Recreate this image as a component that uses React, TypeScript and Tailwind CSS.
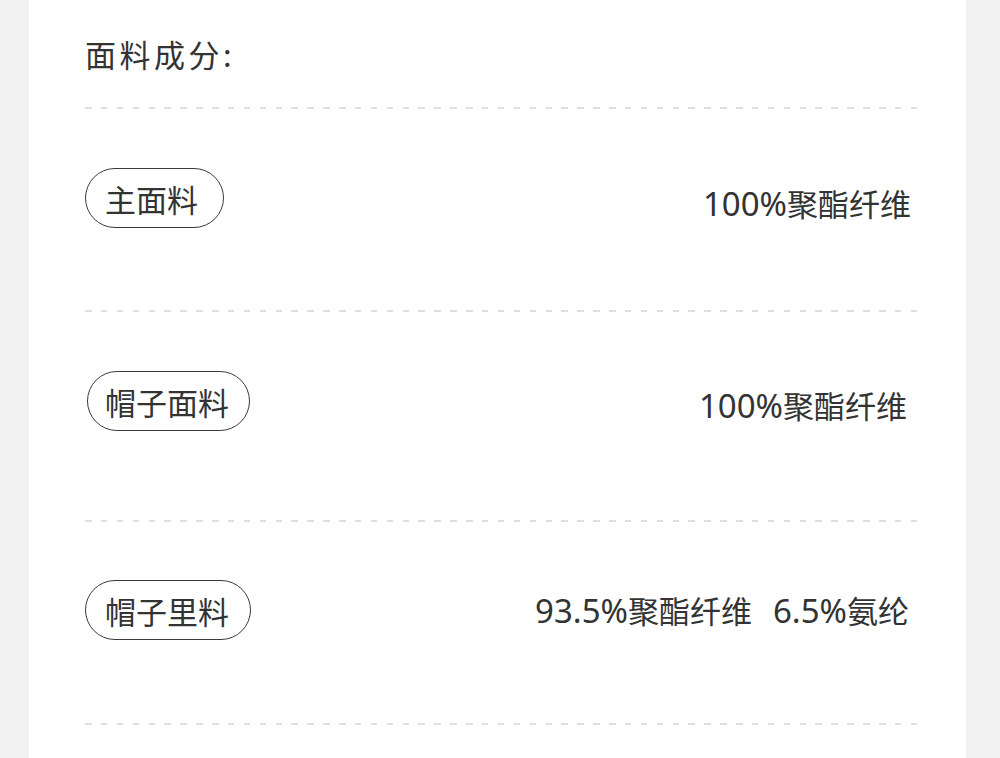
import React from "react";

const cjk = { fontFamily: '"Noto Sans CJK SC", "Noto Sans", sans-serif' };
const latin = { fontFamily: '"Noto Sans", "Noto Sans CJK SC", sans-serif' };

function Dash({ className = "" }: { className?: string }) {
  return (
    <div
      className={
        "h-[2px] w-full bg-[repeating-linear-gradient(90deg,#dedede_0_6.5px,transparent_6.5px_15.88px)] " +
        className
      }
    />
  );
}

function Pill({ label, w, pl }: { label: string; w: string; pl: string }) {
  return (
    <div
      className={
        "flex h-[60px] items-center rounded-full border border-[#3a3a3a] text-[31px] leading-[31px] text-[#333] " +
        w +
        " " +
        pl
      }
      style={cjk}
    >
      {label}
    </div>
  );
}

function Num({ children, className = "" }: { children: React.ReactNode; className?: string }) {
  return (
    <span className={"text-[33px] " + className} style={latin}>
      {children}
    </span>
  );
}

export default function App() {
  return (
    <div className="flex h-[758px] w-[1000px] bg-[#f1f1f1]">
      <div className="ml-[29px] h-full w-[937px] bg-white pl-[56px] pr-[48px]">
        <div
          className="mt-[38px] text-[31px] leading-[31px] tracking-[3.5px] text-[#333]"
          style={cjk}
        >
          面料成分:
        </div>
        <Dash className="mt-[38px]" />

        <div className="mt-[59px] flex items-start justify-between">
          <Pill label="主面料" w="w-[139px]" pl="pl-[19px]" />
          <div
            className="mt-[20px] mr-[7px] whitespace-nowrap text-[31px] leading-[30px] text-[#333]"
            style={cjk}
          >
            <Num>100%</Num>聚酯纤维
          </div>
        </div>
        <Dash className="mt-[82px]" />

        <div className="mt-[59px] flex items-start justify-between">
          <div className="ml-[2px]">
            <Pill label="帽子面料" w="w-[163px]" pl="pl-[17px]" />
          </div>
          <div
            className="mt-[19px] mr-[11px] whitespace-nowrap text-[31px] leading-[30px] text-[#333]"
            style={cjk}
          >
            <Num>100%</Num>聚酯纤维
          </div>
        </div>
        <Dash className="mt-[89px]" />

        <div className="mt-[58px] flex items-start justify-between">
          <Pill label="帽子里料" w="w-[166px]" pl="pl-[19px]" />
          <div
            className="mt-[15px] mr-[9px] whitespace-nowrap text-[31px] leading-[30px] text-[#333]"
            style={cjk}
          >
            <Num>93.5%</Num>聚酯纤维<Num className="ml-[21px]">6.5%</Num>氨纶
          </div>
        </div>
        <Dash className="mt-[83px]" />
      </div>
    </div>
  );
}
